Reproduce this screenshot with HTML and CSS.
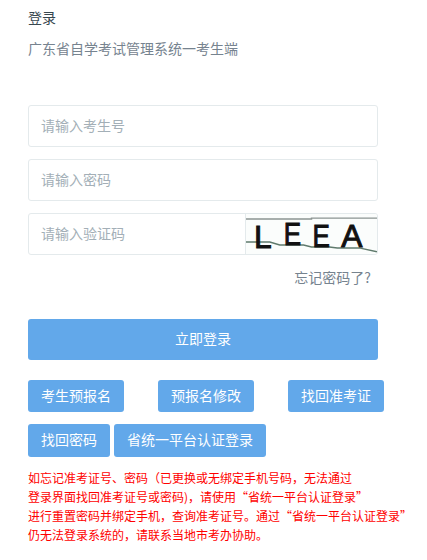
FILE: index.html
```html
<!DOCTYPE html>
<html lang="zh-CN">

	<head>
		<meta charset="UTF-8">
		<title>登录</title>
		<link rel="stylesheet" href="styles.css">
	</head>

	<body>
		<div class="wrap">
			<div class="head">登录</div>
			<div class="sub">广东省自学考试管理系统一考生端</div>

			<div class="field">请输入考生号</div>
			<div class="field">请输入密码</div>
			<div class="field codeRow">
				<span class="codeText">请输入验证码</span>
				<svg class="code" viewBox="0 0 132 40" width="132" height="40">
					<rect width="132" height="40" fill="#fbfdfc" />
					<path d="M0 5H66V4H132" fill="none" stroke="#8c9491" stroke-width="1.5" />
					<path d="M0 28H24L34 31H58L66 33H84L92 34H114L132 38" fill="none" stroke="#5f7a6c" stroke-width="1.5" />
					<text x="8" y="34" class="codeLetter">L</text>
					<text transform="translate(38 31) scale(.82 1)" class="codeLetter">E</text>
					<text transform="translate(67 33) scale(.82 1)" class="codeLetter">E</text>
					<text x="96" y="33" class="codeLetter">A</text>
				</svg>
			</div>
			<div class="forget">忘记密码了?</div>

			<div class="submit">立即登录</div>

			<div class="btnRow spread">
				<span class="btn">考生预报名</span>
				<span class="btn">预报名修改</span>
				<span class="btn">找回准考证</span>
			</div>
			<div class="btnRow">
				<span class="btn tall">找回密码</span>
				<span class="btn tall">省统一平台认证登录</span>
			</div>

			<div class="notice">
				如忘记准考证号、密码（已更换或无绑定手机号码，无法通过<br>
				登录界面找回准考证号或密码)，请使用“省统一平台认证登录”<br>
				进行重置密码并绑定手机，查询准考证号。通过“省统一平台认证登录”<br>
				仍无法登录系统的，请联系当地市考办协助。
			</div>
		</div>
	</body>

</html>
```

FILE: styles.css
```css
* {
	box-sizing: border-box;
}

body {
	margin: 0;
	background: #fff;
	font-family: "Noto Sans CJK SC", "Liberation Sans", sans-serif;
	text-spacing-trim: space-all;
}

.wrap {
	width: 427px;
	height: 560px;
	padding: 7px 0 0 28px;
	overflow: hidden;
}

.head {
	font-size: 14px;
	line-height: 20px;
	color: #37474f;
}

.sub {
	margin: 11px 0 47px;
	font-size: 14px;
	line-height: 20px;
	color: #76838f;
}

.field {
	width: 350px;
	height: 42px;
	margin-bottom: 12px;
	padding-left: 12px;
	border: 1px solid #e4eaec;
	border-radius: 3px;
	font-size: 14px;
	line-height: 38px;
	color: #a3afb7;
}

.codeRow {
	display: flex;
	justify-content: space-between;
	margin-bottom: 0;
	overflow: hidden;
}

.code {
	border-left: 1px solid #e4eaec;
}

.codeLetter {
	font: 32px "Liberation Sans", sans-serif;
	fill: #111;
	stroke: #111;
	stroke-width: 1px;
}

.forget {
	width: 350px;
	margin-top: 12px;
	padding-right: 7px;
	text-align: right;
	font-size: 14px;
	line-height: 20px;
	color: #76838f;
}

.submit {
	width: 350px;
	height: 41px;
	margin-top: 32px;
	border-radius: 3px;
	background: #62a8ea;
	text-align: center;
	font-size: 14px;
	line-height: 39px;
	color: #fff;
}

.btnRow {
	display: flex;
	gap: 4px;
	margin-top: 12px;
}

.spread {
	gap: 34px;
	margin-top: 20px;
}

.btn {
	height: 32px;
	padding: 0 13px;
	border-radius: 3px;
	background: #62a8ea;
	font-size: 14px;
	line-height: 30px;
	color: #fff;
}

.tall {
	height: 33px;
	line-height: 31px;
}

.notice {
	margin-top: 11px;
	font-size: 12px;
	line-height: 19px;
	color: #f00;
	white-space: nowrap;
}
```
